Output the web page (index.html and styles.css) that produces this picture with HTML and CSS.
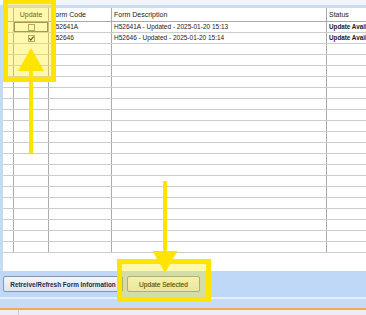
FILE: index.html
```html
<!DOCTYPE html>
<html lang="en">
<head>
    <meta charset="UTF-8">
    <meta name="viewport" content="width=device-width, initial-scale=1.0">
    <title>Form Updates</title>
    <link rel="stylesheet" href="styles.css">
</head>
<body>

<div class="window">

    <div class="topbar"></div>

    <div class="main">
        <div class="side"></div>
        <div class="grid">
            <div class="row head">
                <div class="cell"></div>
                <div class="cell center">Update</div>
                <div class="cell">Form Code</div>
                <div class="cell">Form Description</div>
                <div class="cell">Status</div>
            </div>
            <div class="row">
                <div class="cell"></div>
                <div class="cell chk focus"><span class="box"></span></div>
                <div class="cell">H52641A</div>
                <div class="cell">H52641A - Updated - 2025-01-20 15:13</div>
                <div class="cell status">Update Available</div>
            </div>
            <div class="row">
                <div class="cell"></div>
                <div class="cell chk"><span class="box"><svg viewBox="0 0 7 7" width="7" height="7"><path d="M1.3 3.4 L2.8 5 L5.6 1.6" fill="none" stroke="#222" stroke-width="1.2"/></svg></span></div>
                <div class="cell">H52646</div>
                <div class="cell">H52646 - Updated - 2025-01-20 15:14</div>
                <div class="cell status">Update Available</div>
            </div>
            <!-- empty rows -->
            <div class="row"><div class="cell"></div><div class="cell"></div><div class="cell"></div><div class="cell"></div><div class="cell"></div></div>
            <div class="row"><div class="cell"></div><div class="cell"></div><div class="cell"></div><div class="cell"></div><div class="cell"></div></div>
            <div class="row"><div class="cell"></div><div class="cell"></div><div class="cell"></div><div class="cell"></div><div class="cell"></div></div>
            <div class="row"><div class="cell"></div><div class="cell"></div><div class="cell"></div><div class="cell"></div><div class="cell"></div></div>
            <div class="row"><div class="cell"></div><div class="cell"></div><div class="cell"></div><div class="cell"></div><div class="cell"></div></div>
            <div class="row"><div class="cell"></div><div class="cell"></div><div class="cell"></div><div class="cell"></div><div class="cell"></div></div>
            <div class="row"><div class="cell"></div><div class="cell"></div><div class="cell"></div><div class="cell"></div><div class="cell"></div></div>
            <div class="row"><div class="cell"></div><div class="cell"></div><div class="cell"></div><div class="cell"></div><div class="cell"></div></div>
            <div class="row"><div class="cell"></div><div class="cell"></div><div class="cell"></div><div class="cell"></div><div class="cell"></div></div>
            <div class="row"><div class="cell"></div><div class="cell"></div><div class="cell"></div><div class="cell"></div><div class="cell"></div></div>
            <div class="row"><div class="cell"></div><div class="cell"></div><div class="cell"></div><div class="cell"></div><div class="cell"></div></div>
            <div class="row"><div class="cell"></div><div class="cell"></div><div class="cell"></div><div class="cell"></div><div class="cell"></div></div>
            <div class="row"><div class="cell"></div><div class="cell"></div><div class="cell"></div><div class="cell"></div><div class="cell"></div></div>
            <div class="row"><div class="cell"></div><div class="cell"></div><div class="cell"></div><div class="cell"></div><div class="cell"></div></div>
            <div class="row"><div class="cell"></div><div class="cell"></div><div class="cell"></div><div class="cell"></div><div class="cell"></div></div>
            <div class="row"><div class="cell"></div><div class="cell"></div><div class="cell"></div><div class="cell"></div><div class="cell"></div></div>
            <div class="row"><div class="cell"></div><div class="cell"></div><div class="cell"></div><div class="cell"></div><div class="cell"></div></div>
            <div class="row"><div class="cell"></div><div class="cell"></div><div class="cell"></div><div class="cell"></div><div class="cell"></div></div>
            <div class="row"><div class="cell"></div><div class="cell"></div><div class="cell"></div><div class="cell"></div><div class="cell"></div></div>
        </div>
    </div>

    <div class="footer">
        <button class="btn btn_wide">Retreive/Refresh Form Information</button>
        <button class="btn btn_update">Update Selected</button>
    </div>
    <div class="footer_line"></div>
    <div class="footer_low"></div>
    <div class="orange"></div>
    <div class="statusbar"><span class="sb_part"></span></div>

    <!-- yellow annotation marks -->
    <svg class="marks" width="366" height="315" viewBox="0 0 366 315">
        <rect x="5.5" y="1.5" width="48" height="78" fill="rgba(255,232,0,0.32)" stroke="#ffe400" stroke-width="5"/>
        <rect x="31" y="68" width="4" height="85" fill="#ffe400" transform="translate(-2 0)"/>
        <polygon points="18,71 44,71 31,48" fill="#ffe400"/>

        <rect x="119.5" y="261.5" width="89" height="38" fill="rgba(255,232,0,0.32)" stroke="#ffe400" stroke-width="5"/>
        <rect x="163" y="181" width="4" height="72" fill="#ffe400"/>
        <polygon points="152.5,251 177.5,251 165,273" fill="#ffe400"/>
    </svg>

</div>

</body>
</html>
```

FILE: styles.css
```css
body {
  margin: 0;
  font-family: "Liberation Sans", Arial, sans-serif;
  background: #e9ecf0;
}

.window {
  position: relative;
  width: 366px;
  height: 315px;
  overflow: hidden;
}

.topbar {
  height: 5px;
  background: #f2f6fb;
  border-bottom: 3px solid #c8dcf3;
}

.main {
  display: flex;
  height: 263px;
}

.side {
  width: 3px;
  background: #c4dbf6;
}

/* The grid */
.grid {
  flex: 1;
  overflow: hidden;
  background: #fff;
}

.row {
  display: grid;
  grid-template-columns: 11px 35px 63px 215px 90px;
  height: 11px;
  box-sizing: border-box;
  border-bottom: 1px solid #cdcdcd;
}

.row.head {
  height: 14px;
  border-bottom: 1px solid #a9a9a9;
}

.cell {
  box-sizing: border-box;
  border-right: 1px solid #ababab;
  padding-left: 2px;
  font-size: 6.5px;
  line-height: 10px;
  color: #222;
  white-space: nowrap;
  overflow: hidden;
}

.head .cell {
  font-size: 7px;
  line-height: 13px;
  color: #1b1b1b;
}

.center {
  text-align: center;
  padding-left: 0;
}

.status {
  font-weight: bold;
  font-size: 6.3px;
  color: #1a1a1a;
}

.chk {
  display: flex;
  align-items: center;
  justify-content: center;
  padding-left: 0;
}

.focus {
  box-shadow: inset 0 0 0 1px #777;
}

.box {
  display: block;
  width: 7px;
  height: 7px;
  box-sizing: border-box;
  border: 1px solid #8c8c8c;
  background: #fff;
  position: relative;
}

.box svg {
  position: absolute;
  left: -1px;
  top: -1px;
}

/* Buttons area */
.footer {
  height: 26px;
  background: #bfd8f8;
  display: flex;
  align-items: center;
  gap: 4px;
  padding: 0 3px;
  box-sizing: border-box;
}

.btn {
  height: 16px;
  padding: 0;
  border: 1px solid #8796b0;
  border-radius: 2px;
  background: linear-gradient(#f3f5f9, #dfe5ee);
  font-family: "Liberation Sans", Arial, sans-serif;
  font-size: 6.4px;
  font-weight: bold;
  color: #1d2b47;
}

.btn_wide {
  width: 120px;
}

.btn_update {
  width: 73px;
  font-weight: normal;
  font-size: 6.6px;
  color: #3a3424;
  text-shadow: 0 0 0.3px #3a3424;
}

.footer_line {
  height: 2px;
  background: #e5eefa;
}

.footer_low {
  height: 9px;
  background: #c6dcf6;
}

.orange {
  height: 2px;
  background: #f3a65c;
}

.statusbar {
  height: 5px;
  background: #eceef1;
}

.sb_part {
  display: block;
  width: 18px;
  height: 5px;
  border-right: 1px solid #c9ccd2;
}

.marks {
  position: absolute;
  left: 0;
  top: 0;
  pointer-events: none;
}
```
